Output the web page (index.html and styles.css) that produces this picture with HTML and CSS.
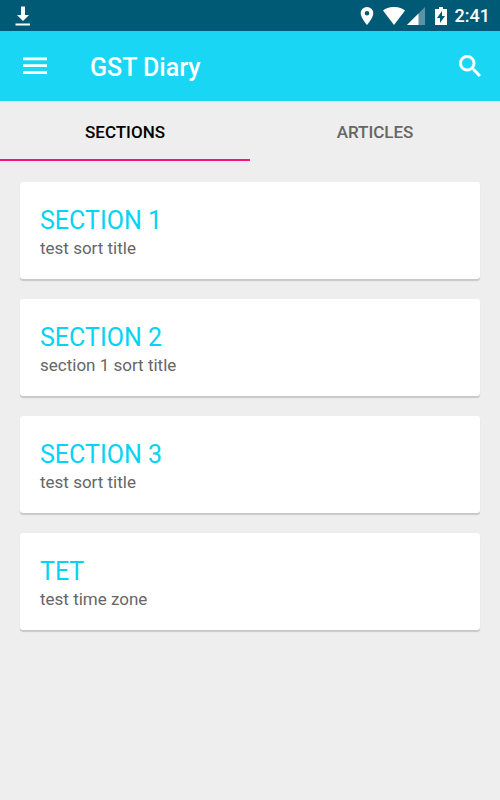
FILE: index.html
```html
<!DOCTYPE html>
<html lang="en">
<head>
<meta charset="utf-8">
<meta name="viewport" content="width=device-width, initial-scale=1">
<title>GST Diary</title>
<link rel="stylesheet" href="styles.css">
</head>
<body>
<div class="status-bar">
  <svg class="icon-download" width="16" height="20" viewBox="0 0 16 20" fill="#fff" aria-hidden="true"><path d="M6 0.500h4v8.500h4l-6 6-6-6h4zM0.500 17.500h14.500v2H0.500z"/></svg>
  <div class="status-icons">
    <svg width="14" height="18" viewBox="0 0 14 18" fill="#fff" aria-hidden="true"><path fill-rule="evenodd" d="M7 0a6.300 6.300 0 0 0-6.300 6.300C.7 11 7 18 7 18s6.300-7 6.300-11.700A6.300 6.300 0 0 0 7 0zm0 4a2.300 2.300 0 1 1 0 4.600A2.300 2.300 0 0 1 7 4z"/></svg>
    <svg class="icon-wifi" width="22" height="18" viewBox="0 0 22 18" fill="#fff" aria-hidden="true"><path d="M0 3.500C6 -1.200 16 -1.200 22 3.500L11 18z"/></svg>
    <svg class="icon-signal" width="18" height="18" viewBox="0 0 18 18" fill="#fff" aria-hidden="true"><path fill-opacity=".35" d="M0 18 18 0v18z"/><path d="M0 18 11.500 6.500v11.500z"/></svg>
    <svg class="icon-battery" width="12" height="18" viewBox="0 0 12 18" fill="#fff" aria-hidden="true"><path fill-rule="evenodd" d="M4 0h4v2h4v16H0V2h4zm3 4-5 7h3v5l5-7H7z"/></svg>
    <time class="clock">2:41</time>
  </div>
</div>
<header class="app-bar">
  <button class="icon-button" type="button" aria-label="Menu">
    <svg width="24" height="18" viewBox="0 0 24 18" fill="#fff" aria-hidden="true"><path d="M0 .5h24v2.700H0zM0 7.300h24V10H0zM0 14.300h24V17H0z"/></svg>
  </button>
  <h1 class="app-title">GST Diary</h1>
  <button class="icon-button" type="button" aria-label="Search">
    <svg width="22" height="22" viewBox="2.800 2.800 17.900 17.900" fill="#fff" stroke="#fff" stroke-width=".4" aria-hidden="true"><path d="M15.500 14h-.79l-.28-.27A6.471 6.471 0 0 0 16 9.500 6.500 6.500 0 1 0 9.500 16c1.610 0 3.090-.59 4.230-1.570l.27.28v.79l5 4.990L20.490 19l-4.990-5zm-6 0C7.010 14 5 11.990 5 9.500S7.010 5 9.500 5 14 7.010 14 9.500 11.990 14 9.500 14z"/></svg>
  </button>
</header>
<nav class="tabs" role="tablist">
  <button class="tab tab-active" type="button" role="tab" aria-selected="true">SECTIONS</button>
  <button class="tab" type="button" role="tab" aria-selected="false">ARTICLES</button>
</nav>
<main class="list">
  <a class="card" href="#section-1"><h2 class="card-title">SECTION 1</h2><p class="card-text">test sort title</p></a>
  <a class="card" href="#section-2"><h2 class="card-title">SECTION 2</h2><p class="card-text">section 1 sort title</p></a>
  <a class="card" href="#section-3"><h2 class="card-title">SECTION 3</h2><p class="card-text">test sort title</p></a>
  <a class="card" href="#tet"><h2 class="card-title">TET</h2><p class="card-text">test time zone</p></a>
</main>
</body>
</html>
```
FILE: styles.css
```css
* {
  box-sizing: border-box;
}

body {
  margin: 0;
  background: #eeeeee;
  font-family: Roboto, "Liberation Sans", sans-serif;
}

h1,
h2,
p {
  margin: 0;
}

button {
  border: 0;
  padding: 0;
  background: none;
  font-family: inherit;
  cursor: pointer;
}

svg {
  display: block;
}

.status-bar {
  display: flex;
  align-items: center;
  justify-content: space-between;
  height: 31px;
  padding: 0 10px 0 15px;
  background: #005a75;
}

.status-icons {
  display: flex;
  align-items: center;
}

.icon-wifi {
  margin-left: 9px;
}

.icon-signal {
  margin-left: 2px;
}

.icon-battery {
  margin-left: 10px;
}

.clock {
  margin-left: 8px;
  color: #ffffff;
  font-size: 18px;
  font-weight: 500;
  line-height: 30px;
}

.app-bar {
  display: flex;
  align-items: center;
  height: 70px;
  padding: 0 10px 0 15px;
  background: #1ad6f5;
}

.icon-button {
  display: flex;
  align-items: center;
  justify-content: center;
  width: 40px;
  height: 40px;
}

.app-title {
  flex: 1;
  margin-left: 35px;
  padding-top: 4px;
  color: #ffffff;
  font-size: 25px;
  font-weight: 500;
  line-height: 30px;
}

.tabs {
  display: grid;
  grid-template-columns: 1fr 1fr;
  height: 60px;
}

.tab {
  padding-top: 4px;
  border-bottom: 2px solid transparent;
  color: #666666;
  font-size: 17px;
  font-weight: 500;
}

.tab-active {
  border-color: #f5157f;
  color: #000000;
}

.list {
  display: grid;
  gap: 20px;
  padding: 21px 20px;
}

.card {
  padding: 24px 20px 18px;
  border-radius: 3px;
  background: #ffffff;
  box-shadow: 0 2px 1px #c8c8c8;
  text-decoration: none;
}

.card-title {
  color: #05d3f5;
  font-size: 25px;
  font-weight: 400;
  line-height: 30px;
}

.card-text {
  color: #666666;
  font-size: 17px;
  line-height: 25px;
}
```
